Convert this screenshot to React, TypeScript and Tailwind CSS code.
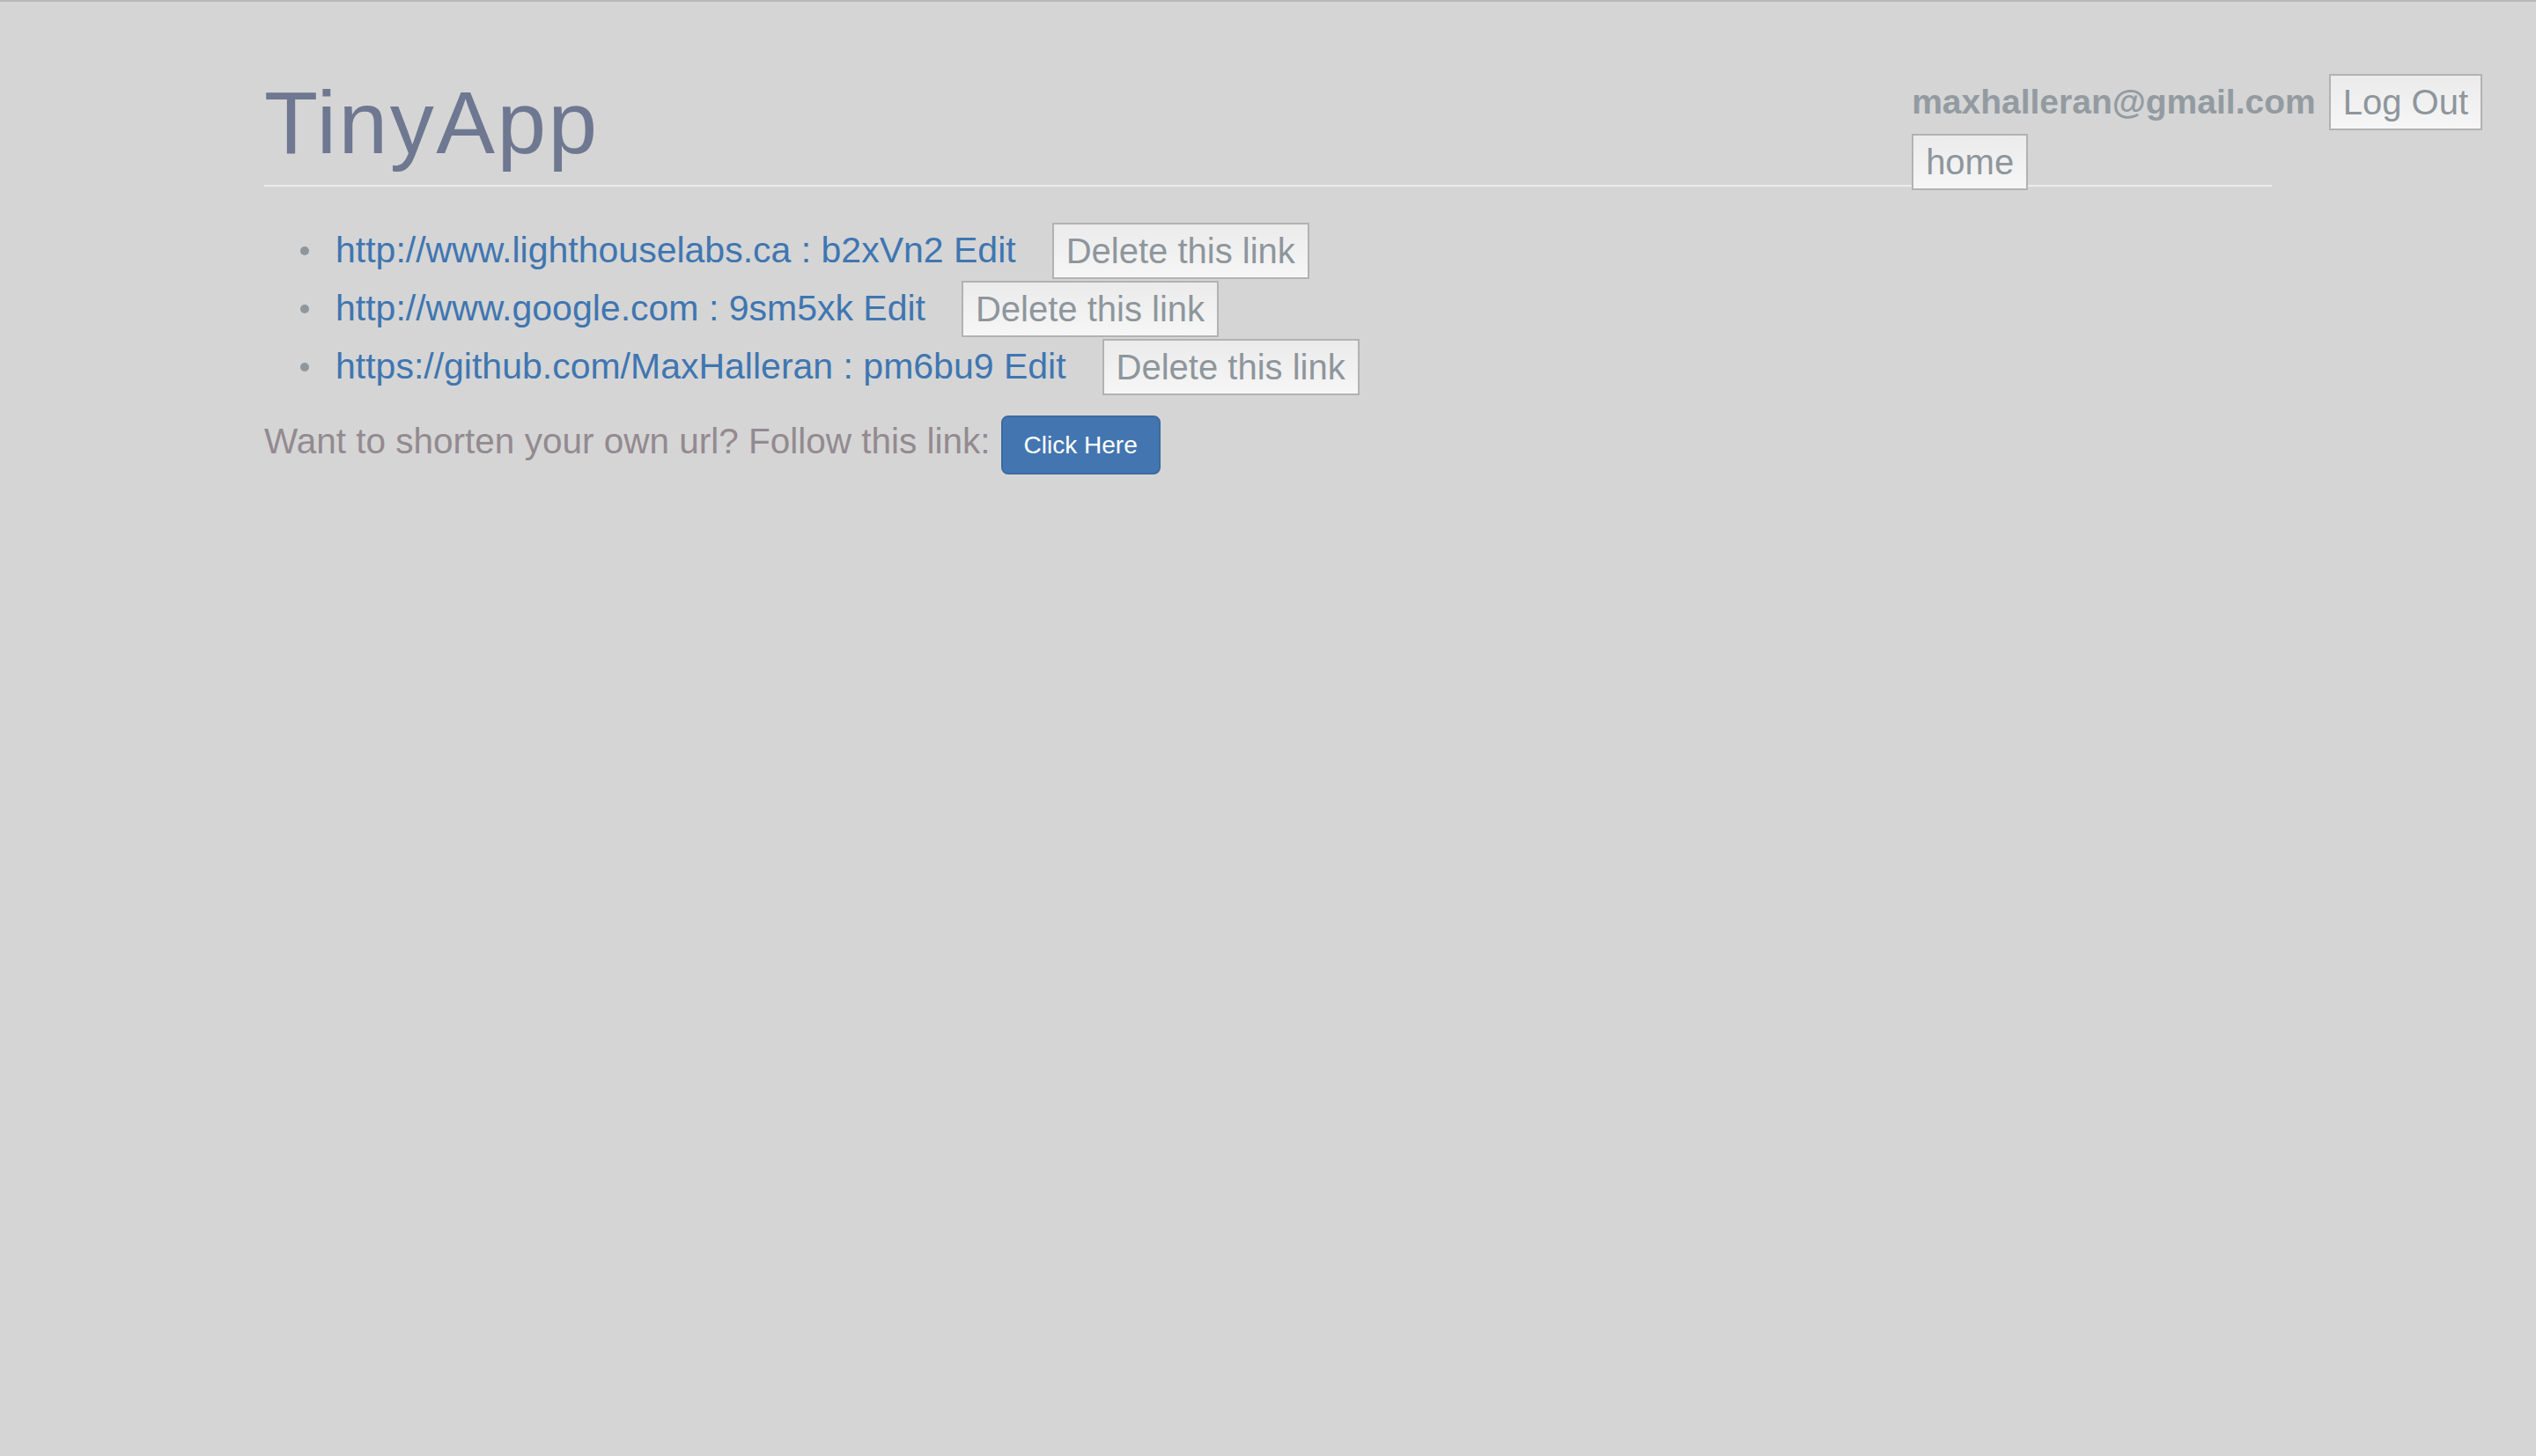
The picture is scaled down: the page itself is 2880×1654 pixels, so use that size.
const links = [
  { id: "b2xVn2", url: "http://www.lighthouselabs.ca" },
  { id: "9sm5xk", url: "http://www.google.com" },
  { id: "pm6bu9", url: "https://github.com/MaxHalleran" },
];

const greyButton =
  "h-[64px] px-[14px] border-2 border-[#b2b2b2] bg-linear-to-b from-[#ebebeb] to-[#f6f6f6] text-[40px] leading-none text-[#8e969c]";

export default function App() {
  return (
    <div className="relative min-h-screen bg-[#d5d5d5] border-t-2 border-[#b8b8b8] font-['Liberation_Sans',Arial,sans-serif]">
      <div className="mx-[300px] flex flex-col pt-[82px]">
        <h1 className="text-[100px] leading-[110px] tracking-[2.5px] text-[#6f7891]">TinyApp</h1>
        <hr className="mt-[16px] border-0 border-t-2 border-[#ececec]" />

        <ul className="mt-[40px] flex flex-col">
          {links.map((link) => (
            <li key={link.id} className="flex h-[66px] items-center">
              <span className="ml-[41px] h-[10px] w-[10px] rounded-full bg-[#8e979d]" />
              <a href="#" className="ml-[30px] text-[41px] text-[#3f76b1]">
                {link.url} : {link.id} Edit
              </a>
              <button className={`ml-[41px] ${greyButton}`}>Delete this link</button>
            </li>
          ))}
        </ul>

        <p className="mt-[21px] flex items-baseline text-[40.5px] text-[#938a90]">
          <span>Want to shorten your own url? Follow this link:</span>
          <button className="ml-[12px] rounded-[8px] border-2 border-[#3b6ba0] bg-[#4376b0] px-[24px] py-[12px] text-[28px] leading-[39px] text-white">
            Click Here
          </button>
        </p>
      </div>

      <div className="absolute right-[61px] top-[82px] flex flex-col items-start gap-[4px]">
        <div className="flex items-center gap-[15px]">
          <span className="text-[39px] font-bold text-[#939ba1]">maxhalleran@gmail.com</span>
          <button className={greyButton}>Log Out</button>
        </div>
        <button className={greyButton}>home</button>
      </div>
    </div>
  );
}
